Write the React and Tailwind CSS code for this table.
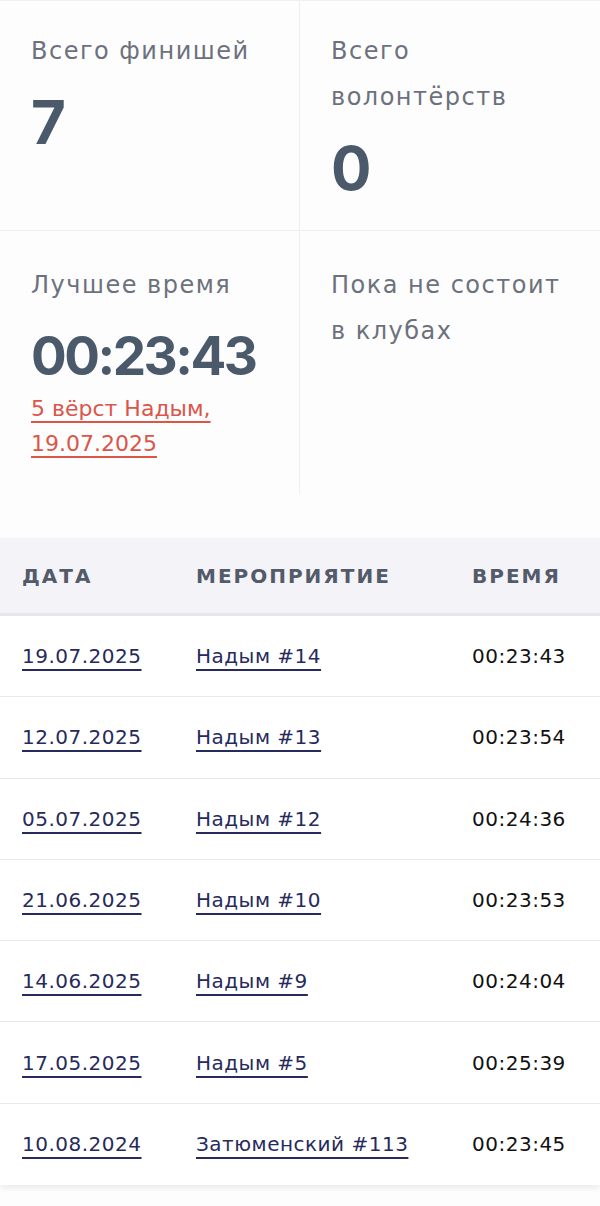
import React from "react";

const rows = [
  { date: "19.07.2025", event: "Надым #14", time: "00:23:43" },
  { date: "12.07.2025", event: "Надым #13", time: "00:23:54" },
  { date: "05.07.2025", event: "Надым #12", time: "00:24:36" },
  { date: "21.06.2025", event: "Надым #10", time: "00:23:53" },
  { date: "14.06.2025", event: "Надым #9", time: "00:24:04" },
  { date: "17.05.2025", event: "Надым #5", time: "00:25:39" },
  { date: "10.08.2024", event: "Затюменский #113", time: "00:23:45" },
];

function StatCell({ label, children, className }) {
  return (
    <div className={"px-[31px] " + className}>
      <div className="text-[24px] leading-[46px] tracking-[1.5px] text-[#6c717d]">{label}</div>
      {children}
    </div>
  );
}

function App() {
  return (
    <div className="w-[600px] min-h-[1206px] bg-[#fdfdfe] font-['DejaVu_Sans',sans-serif]">
      <div className="grid grid-cols-2 border-t border-[#f0f0f4]">
        <StatCell label="Всего финишей" className="h-[230px] pt-[27px] border-r border-b border-[#eeeef3]">
          <div className="mt-[12px] font-['Inter',sans-serif] text-[60px] leading-[72px] font-bold text-[#4a5a6a]">7</div>
        </StatCell>
        <StatCell label="Всего волонтёрств" className="h-[230px] pt-[27px] border-b border-[#eeeef3]">
          <div className="mt-[12px] font-['Inter',sans-serif] text-[60px] leading-[72px] font-bold text-[#4a5a6a]">0</div>
        </StatCell>
        <StatCell label="Лучшее время" className="h-[263px] pt-[31px] border-r border-[#eeeef3]">
          <div className="mt-[12px] font-['Inter',sans-serif] text-[53px] leading-[72px] font-bold text-[#4a5a6a] tracking-[-2.5px]">
            00:23:43
          </div>
          <a
            href="#"
            className="block text-[22px] leading-[35px] text-[#dc5549] underline underline-offset-[5px] decoration-[1.5px] -mt-[1px]"
          >
            5 вёрст Надым,
            <br />
            19.07.2025
          </a>
        </StatCell>
        <StatCell label="Пока не состоит в клубах" className="h-[263px] pt-[31px]" />
      </div>

      <div className="mt-[44px] shadow-[0_3px_6px_rgba(0,0,0,0.08)]">
        <div className="grid grid-cols-[174px_276px_150px] h-[78px] items-center bg-[#f3f3f8] border-b-[3px] border-[#e6e6ee] text-[20px] font-semibold tracking-[2px] text-[#535a69]">
          <div className="pl-[22px]">ДАТА</div>
          <div className="pl-[22px]">МЕРОПРИЯТИЕ</div>
          <div className="pl-[22px]">ВРЕМЯ</div>
        </div>
        {rows.map((r, i) => (
          <div
            key={r.date}
            className={
              "grid grid-cols-[174px_276px_150px] h-[81.3px] items-center bg-white text-[20px] tracking-[0.5px] " +
              (i < rows.length - 1 ? "border-b border-[#e8e8ee]" : "")
            }
          >
            <div className="pl-[22px]">
              <a href="#" className="text-[#272a5c] underline underline-offset-[6px] decoration-[1.5px]">
                {r.date}
              </a>
            </div>
            <div className="pl-[22px]">
              <a href="#" className="text-[#272a5c] underline underline-offset-[6px] decoration-[1.5px]">
                {r.event}
              </a>
            </div>
            <div className="pl-[22px] text-[#111]">{r.time}</div>
          </div>
        ))}
      </div>
    </div>
  );
}

export default App;
